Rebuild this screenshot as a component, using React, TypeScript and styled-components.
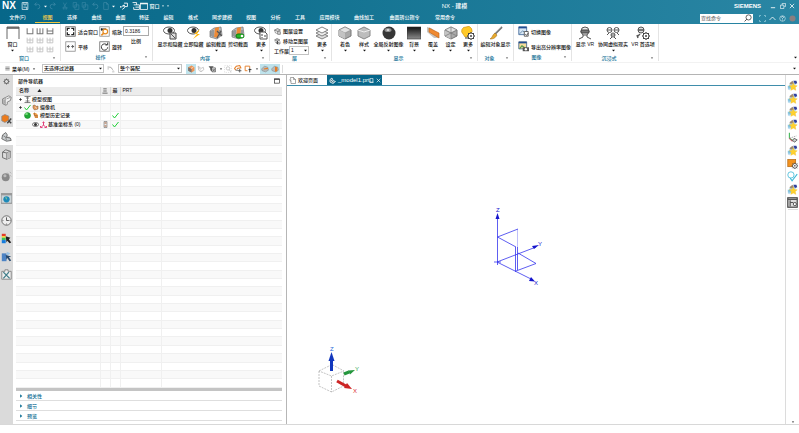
import React, { ReactNode } from "react";
import styled, { createGlobalStyle } from "styled-components";

const Global = createGlobalStyle`
  * { box-sizing: border-box; }
  body { margin: 0; background: #fff; }
  body, button, input, select, table {
    font-family: "Liberation Sans", "Noto Sans CJK SC", sans-serif;
    font-size: 5px;
    font-weight: 500;
    line-height: 8px;
    color: #111;
  }
  button { border: 0; padding: 0; margin: 0; background: transparent; color: inherit; font-size: inherit; }
  svg { display: block; flex: none; }
`;

/* ---------- icons, drawn on a 14 x 14 grid ---------- */

const cubeShape = (
  <>
    <path d="M7 1 13 4V10L7 13 1 10V4Z" fill="#a9a9a9" stroke="#777" />
    <path d="M7 1 13 4 7 7 1 4Z" fill="#e2e2e2" stroke="#888" strokeWidth=".6" />
    <path d="M7 7V13L1 10V4Z" fill="#c3c3c3" />
  </>
);
const eyes = (
  <>
    <ellipse cx="6" cy="4.500" rx="5.500" ry="3.500" fill="#fff" stroke="#555" />
    <circle cx="7" cy="4.500" r="2.500" fill="#333" />
  </>
);
const section = (
  <>
    <path d="M1 5 5 2 12 1 13 9 8 13 1 11Z" fill="#b9bcbf" stroke="#777" strokeWidth=".7" />
    <path d="M6 2 10 1 9 12 5 11Z" fill="#ee8a35" />
    <path d="M2 5V10M4 4V11M11 4V10" stroke="#777" />
  </>
);
const gear = (
  <>
    <circle cx="10" cy="10" r="3" fill="#fff" stroke="#444" />
    <circle cx="10" cy="10" r="1" fill="#444" />
    <path d="M10 6V7M10 13V14M6 10H7M13 10H14M7 7 8 8M12 12 13 13M7 13 8 12M12 8 13 7" stroke="#444" />
  </>
);
const clipboardStar = (
  <>
    <path d="M1 12 3 5 9 3 12 5 9 9 3 13Z" fill="#bfe0f2" />
    <path d="M3 4 7 1 9 4 5 6Z" fill="#a08a70" />
    <path d="M8 1 12 1 13 4 10 5Z" fill="#2e3f9a" />
    <path d="M1 8H5M1 10H5" stroke="#4ba6cf" />
    <path d="m8 4 1.600 3 3.400.4-2.500 2.300.7 3.500L8 11.600 4.900 13.200l.6-3.500L3 7.400 6.400 7Z" fill="#ffd12e" stroke="#f0bd25" strokeWidth=".5" />
  </>
);

const art: Record<string, ReactNode> = {
  window: <><path d="M1 13V1H13V13" fill="#fff" stroke="#666" /><path d="M1 2H13" stroke="#555" strokeWidth="1.500" /></>,
  pane: <path d="M2 2V12H12V2" stroke="#777" strokeWidth="1.800" />,
  paneSplit: <path d="M2 2V12H12V2M7 2V12" stroke="#777" strokeWidth="1.800" />,
  paneRow: <path d="M2 2V12H12V2M2 7H12" stroke="#777" strokeWidth="1.800" />,
  paneDim: <path d="M2 3V12H12V3M2 7H12M7 3V12" stroke="#c0c0c0" strokeWidth="1.500" />,
  fit: <><rect x="1" y="1" width="12" height="12" stroke="#555" /><path d="M3 6V3H6M8 3H11V6M11 8V11H8M6 11H3V8" stroke="#222" strokeWidth="1.600" /></>,
  pan: <><rect x="1" y="1" width="12" height="12" stroke="#888" /><path d="M5 5 3 7 5 9M9 5 11 7 9 9M3 7H6M8 7H11" stroke="#333" /></>,
  zoom: <><rect x="1" y="1" width="12" height="12" stroke="#888" /><path d="M3 4H9M4 3 3 4 4 6" stroke="#222" strokeWidth="1.500" /><circle cx="8" cy="7" r="3" stroke="#e48b24" strokeWidth="1.500" /><path d="M6 9 3 12" stroke="#e48b24" strokeWidth="2" /></>,
  rotate: <><rect x="1" y="1" width="12" height="12" stroke="#666" /><path d="M10 5A4 4 0 1 0 11 8M8 5H11V2" stroke="#222" strokeWidth="1.100" /></>,
  showHide: <>{eyes}<path d="M7 7H13V13H7Z" fill="#ddd" stroke="#444" /><path d="m8 8 4 4" stroke="#555" /></>,
  hideNow: <>{eyes}<path d="m13 3-6 5h3l-4 5 7-5h-3Z" fill="#ffb912" /></>,
  editSection: <>{section}<path d="m8 5 5 5M12 5 8 12" stroke="#555" strokeWidth="1.300" /></>,
  clipSection: <>{section}<rect x="5" y="8" width="8" height="4" rx="2" fill="#28b828" stroke="#0b8011" /><circle cx="11" cy="10" r="1.300" fill="#fff" /></>,
  moreView: <>{eyes}<path d="M6 6H11L13 8V13H6Z" fill="#fff" stroke="#555" /><path d="M8 8V10M8 11V12M10 10H12" stroke="#444" /></>,
  layerSet: <><path d="m7 1 6 3-6 3-6-3Z" fill="#ccc" stroke="#444" /><path d="M1 4 3 10 7 11" stroke="#444" />{gear}</>,
  layerMove: <><path d="m6 1 6 3-6 3-5-3Z" fill="#bbb" stroke="#444" /><path d="M2 7 6 12H12V7" fill="#ddd" stroke="#444" /><path d="M7 6V11M5 9 7 11 9 9" stroke="#111" strokeWidth="1.400" /></>,
  layers: <><path d="M1 10 7 7l6 3-6 3Z" fill="#ddd" stroke="#666" strokeWidth=".8" /><path d="M1 7 7 4l6 3-6 3Z" fill="#eee" stroke="#666" strokeWidth=".8" /><path d="M1 4 7 1l6 3-6 3Z" fill="#fff" stroke="#666" strokeWidth=".8" /></>,
  cube: cubeShape,
  hex: <><path d="M1 4 7 1l6 3v6l-6 3-6-3Z" fill="#bdbdbd" stroke="#888" /><path d="m1 4 6 2 6-2" stroke="#eee" /></>,
  sphere: <><circle cx="7" cy="7" r="6.500" fill="#363636" /><ellipse cx="6" cy="4" rx="3.500" ry="2" fill="#909090" /><ellipse cx="6" cy="4" rx="1.500" ry="1" fill="#ddd" /></>,
  background: <><defs><linearGradient id="night" x1="0" y1="0" x2="0" y2="1"><stop stopColor="#111" /><stop offset="1" stopColor="#8c8c8c" /></linearGradient></defs><path d="M0 1H14V13H0Z" fill="url(#night)" stroke="#333" strokeWidth=".6" /></>,
  slab: <><path d="M1 1 5 2 13 8 12 12 8 12 1 6Z" fill="#c8c5c0" /><path d="M3 2 13 7V12L3 6Z" fill="#f08a31" stroke="#bf5f13" strokeWidth=".6" /></>,
  cubeEdges: <>{cubeShape}<path d="M7 1V13M1 4 13 10M13 4 1 10" stroke="#777" strokeWidth=".7" /></>,
  bulb: <><path d="M5 1A4 4 0 0 0 2 8L4 11H7L9 8A4 4 0 0 0 5 1Z" fill="#ffc928" stroke="#c78b0d" strokeWidth=".6" /><path d="M4 12H7" stroke="#444" />{gear}</>,
  brush: <><path d="M13 1 6 8" stroke="#777" strokeWidth="1.800" /><path d="M12 1 6 7" stroke="#ccc" strokeWidth=".6" /><path d="M6 7 8 9C6 13 3 13 1 13 4 11 3 9 6 7Z" fill="#e7a92c" stroke="#966512" strokeWidth=".5" /></>,
  picture: <><path d="M1 1H11V11H1Z" fill="#d8e7f5" stroke="#315b91" /><path d="M1 2H11" stroke="#234d91" strokeWidth="2" /><path d="m2 10 4-4 3 3" stroke="#50799b" /><path d="M8 7h5v6H8Z" fill="#fff" stroke="#444" /><path d="m9 10 2 2 2-3" stroke="#333" /></>,
  exportPicture: <><path d="M1 1H11V10H1Z" fill="#f5dc9b" stroke="#375a88" /><path d="M1 2H11" stroke="#234d91" strokeWidth="2" /><path d="m2 10 3-4 4 3" stroke="#4f9a4d" strokeWidth="1.500" /><rect x="6" y="8" width="8" height="5" fill="#555" /><circle cx="10" cy="10.500" r="1.500" fill="#fff" /></>,
  headset: <><path d="M4 2Q7 0 10 2L11 6 9 9H5L3 6Z" fill="#eee" stroke="#555" /><rect x="3" y="4" width="8" height="3" rx="1" fill="#777" stroke="#444" /><path d="M5 9V11L1 13M9 9V11L13 13" stroke="#555" /></>,
  people: <><circle cx="3.500" cy="4" r="2.500" stroke="#555" /><circle cx="10.500" cy="4" r="2.500" stroke="#555" /><circle cx="7" cy="9" r="2" stroke="#555" /><path d="M1 4H6M8 4H13M5 9H9M1 9 3 7M13 9 11 7M4 13 6 11M10 13 8 11" stroke="#555" /></>,
  headsetGear: <><circle cx="5" cy="4" r="3" fill="#ddd" stroke="#555" /><path d="M2 4H8M1 11 4 8M1 9 2 12" stroke="#555" strokeWidth="1.400" />{gear}</>,
  list: <path d="M1 3H13M1 7H13M1 11H13" stroke="#444" strokeWidth="1.600" />,
  filter: <path d="M2 2V8M5 3 9 7M7 4 11 10M9 12H13M3 4H7" stroke="#b7b7b7" strokeWidth="1.500" />,
  paintCube: <><path d="m2 4 6-3 5 3v6l-5 3-6-3Z" fill="#ee9556" /><path d="M2 4 8 7V13L2 10Z" fill="#777" /><path d="m7 6 4-2" stroke="#fff" /></>,
  snapDim: <><path d="M2 2 7 6 11 4 12 8 7 12 3 9Z" stroke="#bbb" strokeWidth="1.400" /><path d="m3 4 5 7" stroke="#bbb" /></>,
  funnel: <><path d="M1 2H10L7 6V11L4 9V6Z" fill="#555" /><path d="M6 5H13V12H7Z" fill="#ddd" stroke="#333" /><path d="m8 7 4 4M12 7 8 11" stroke="#333" /></>,
  searchDim: <><rect x="1" y="1" width="12" height="12" stroke="#ccc" strokeDasharray="2 2" /><circle cx="7" cy="6" r="3" stroke="#aaa" /><path d="m9 8 3 4" stroke="#aaa" /></>,
  orangeAdd: <><path d="M3 9 1 6 4 2 10 1 12 5 5 6" stroke="#e47d26" strokeWidth="1.800" /><path d="M3 9H7M10 7V13M7 10H13" stroke="#555" strokeWidth="1.600" /></>,
  orangeBox: <><path d="M10 6V2H2V10H6" stroke="#e47d26" strokeWidth="1.600" /><path d="M8 8H13M10 6V13" stroke="#333" strokeWidth="1.600" /></>,
  disk: <><path d="m1 7 5-5 6 2 1 5-5 3-6-2Z" fill="#b7babb" stroke="#888" /><path d="M5 7 12 6" stroke="#e77d24" strokeWidth="2" /></>,
  diskHalf: <><path d="m1 7 5-5 6 2 1 5-5 3-6-2Z" fill="#b7babb" stroke="#888" /><path d="M7 3 11 4V11L7 12Z" fill="#e77d24" /></>,
  cog: <><circle cx="7" cy="7" r="4" stroke="#444" strokeWidth="1.600" /><path d="M7 1V3M7 11V13M1 7H3M11 7H13M3 3 4 4M10 10 11 11M3 11 4 10M10 4 11 3" stroke="#444" strokeWidth="1.500" /></>,
  clip: <><path d="M2 5 6 3V13L2 11Z" fill="#ccc" stroke="#777" /><path d="m6 3 4-2 3 2-1 4-4 2v3l-2 1" fill="#eee" stroke="#777" /><path d="M7 5 12 3M4 6V11" stroke="#888" /></>,
  constraint: <><path d="M8 8 13 13M8 13 13 7" stroke="#444" strokeWidth="1.800" /><path d="m1 4 4-2 5 2v5l-5 3-4-2Z" fill="#ec7b1c" stroke="#888" /></>,
  part: <><path d="m2 5 4-3 2 3-1 3 5 1 1 3-6 1-6-3Z" fill="#c9cdcf" stroke="#555" /><path d="m3 6 3 2 1 4M6 8h5" stroke="#777" /></>,
  reuse: <><path d="M2 4 6 1l6 2v8l-5 2-5-2Z" fill="#ddd" stroke="#555" /><path d="M2 4 7 5V13M7 5 12 3" stroke="#555" /><path d="M7 5 12 3V11L7 13Z" fill="#bbb" /></>,
  ball: <><circle cx="6" cy="8" r="5" fill="#888" /><circle cx="5" cy="6" r="2" fill="#bbb" /><path d="m8 2 2 2M11 1 13 3M11 5 13 7" stroke="#aaa" /></>,
  globe: <><rect x="0" y="1" width="14" height="12" fill="#cbd4d8" stroke="#777" /><path d="M0 2H14" stroke="#999" strokeWidth="2" /><circle cx="7" cy="8" r="4" fill="#1d89b8" /><path d="m5 5 3 1-1 3Z" fill="#73c49d" /></>,
  clock: <><circle cx="7" cy="7" r="6" fill="#eee" stroke="#555" /><path d="M7 3V7H10M2 7H3M11 7H12M7 11V12" stroke="#333" /></>,
  rainbow: <><rect x="1" y="1" width="5" height="3" fill="#e43a28" /><rect x="1" y="4" width="5" height="2" fill="#ffda25" /><rect x="1" y="6" width="5" height="3" fill="#39c35e" /><rect x="1" y="9" width="5" height="4" fill="#167cdc" /><path d="M6 4 12 6 10 8 13 12 11 13 8 10 7 12Z" fill="#222" /></>,
  bluePick: <><path d="M1 3H7V13H1Z" fill="#4c83c4" /><path d="m7 1 5 2-4 3" fill="#9ac3e4" /><path d="M6 5 13 7 10 8 13 12 11 13 8 9 7 11Z" fill="#27496e" /></>,
  tools: <><path d="M1 3H5V1H9V3H13V13H1Z" fill="#eee" stroke="#777" /><path d="m3 4 8 8M10 4 3 12" stroke="#407d88" strokeWidth="1.600" /></>,
  modelViews: <path d="M1 1H13M1 13H13M4 4H10M7 1V13M3 10H11" stroke="#555" strokeWidth="1.400" />,
  camera: <><path d="m2 3 4-1 2 3 4-1v6l-7 2-3-4Z" fill="#e69b5b" stroke="#755137" /><path d="m6 6 4 3" stroke="#fff" /></>,
  history: <><path d="M2 2 8 2 12 6V12H6Z" fill="#f3a049" /><path d="M5 1V7H11M6 10H12" stroke="#9e6639" strokeWidth="1.400" /></>,
  green: <><circle cx="7" cy="7" r="6" fill="#22a935" stroke="#118022" /><ellipse cx="5" cy="4" rx="3" ry="2" fill="#7ddd7d" /></>,
  check: <path d="m1 7 4 5 8-10" stroke="#21cf37" strokeWidth="2" />,
  eye: <><ellipse cx="7" cy="7" rx="6" ry="4" fill="#fff" stroke="#444" strokeWidth="1.400" /><circle cx="7" cy="7" r="3" fill="#333" /></>,
  csys: <path d="M7 1V8L2 13M7 8 12 13M5 3H9M1 10V13H5M9 13H13V10" stroke="#e23f78" strokeWidth="2" />,
  note: <><path d="M4 1H10V13H4Z" fill="#eee" stroke="#555" /><path d="M5 4H9M5 10H9" stroke="#a75c32" strokeWidth="2" /></>,
  column: <path d="M3 2H11M3 7H11M1 12H13" stroke="#333" strokeWidth="1.600" />,
  box: <><rect x="1" y="2" width="12" height="10" stroke="#222" strokeWidth="1.500" /><path d="M1 3H13" stroke="#222" strokeWidth="2" /></>,
  page: <><path d="M3 1H9L13 5V13H4Z" fill="#fff" stroke="#555" /><path d="M9 1V5H13M1 5 4 9" stroke="#555" /></>,
  partLight: <path d="m2 5 4-3 2 5 5 2-5 4-6-3Z M4 6l5 5" stroke="#e9f4f8" strokeWidth="1.600" fill="#527f91" />,
  popout: <path d="M3 1H11V12H3ZM1 12H13" stroke="#fff" strokeWidth="1.800" />,
  cross: <path d="m2 2 10 10M12 2 2 12" stroke="currentColor" strokeWidth="1.800" />,
  star: clipboardStar,
  axes: <><path d="M3 1V8L8 11" stroke="#33b04a" strokeWidth="1.300" /><path d="M3 8 12 5" stroke="#999" strokeDasharray="2 1" /><path d="m3 8 4 4" stroke="#c75568" strokeWidth="1.300" /><path d="M9 8 13 10 10 13 7 11Z" fill="#ccc" stroke="#555" /></>,
  orange: <><rect x="1" y="2" width="10" height="9" fill="#f3921d" stroke="#b96c17" />{gear}</>,
  sketch: <><circle cx="5" cy="5" r="4" stroke="#3cb8d7" /><path d="M6 13 13 4M4 9 7 13" stroke="#3cb8d7" strokeWidth="1.400" /></>,
  sheet: <><rect x="1" y="1" width="12" height="12" fill="#ddd" stroke="#444" strokeWidth="1.500" /><path d="M1 3H13M4 4V12M4 7H8" stroke="#555" strokeWidth="1.500" /><circle cx="10" cy="9" r="2" fill="#fff" stroke="#333" /></>,
  save: <path d="M2 1H12V13H2ZM5 1V5H9V1M4 9H10V13" stroke="#eaf5f9" strokeWidth="1.300" />,
  undo: <path d="M3 4H8A4 4 0 0 1 8 12M6 1 3 4 6 7" stroke="currentColor" strokeWidth="1.300" />,
  redo: <path d="M11 4H6A4 4 0 0 0 6 12M8 1 11 4 8 7" stroke="currentColor" strokeWidth="1.300" />,
  cut: <path d="M4 1 8 9M10 1 5 9M3 10 6 9 5 13ZM8 9 11 10 9 13Z" stroke="currentColor" />,
  copy: <path d="M2 1H8V9H2ZM5 5H12V13H5Z" stroke="currentColor" />,
  newPage: <path d="M3 1H8L11 4V13H3ZM8 1V4H11" stroke="currentColor" strokeWidth="1.200" />,
  touch: <path d="M7 2H13V8H8M5 7 7 5 9 8M2 9 6 6 8 10 4 13M1 7V10" stroke="#fff" strokeWidth="1.500" />,
  cascade: <path d="M1 1H8V5M3 5H13V9M6 9H13V13H3V9" stroke="#fff" strokeWidth="1.500" />,
  windowLight: <><rect x="1" y="2" width="12" height="11" stroke="#fff" strokeWidth="1.300" /><path d="M1 3H13" stroke="#fff" strokeWidth="2" /></>,
  minimize: <path d="M2 11H12" stroke="#fff" strokeWidth="2" />,
  restore: <path d="M5 5V1H13V8H10M1 5H9V13H1Z" stroke="#fff" strokeWidth="1.500" />,
  search: <><circle cx="8" cy="6" r="4.500" stroke="#333" strokeWidth="1.300" /><path d="M5 9 1 13" stroke="#333" strokeWidth="1.500" /></>,
  full: <path d="M1 4V1H4M10 1H13V4M13 10V13H10M4 13H1V10" stroke="#9ed1df" strokeWidth="1.400" />,
  up: <path d="m1 10 6-6 6 6" stroke="#fff" strokeWidth="1.600" />,
  help: <><circle cx="7" cy="7" r="5.500" stroke="#fff" /><path d="M5 5Q5 3 7 3T9 5L7 7V9M7 10V11" stroke="#fff" strokeWidth="1.300" /></>,
  avatar: <circle cx="7" cy="7" r="6" fill="#8a7f80" />,
  down: <path d="M3 5H11L7 10Z" fill="currentColor" />,
  right: <path d="M5 3V11L10 7Z" fill="currentColor" />,
  plus: <path d="M7 3V11M3 7H11" stroke="#222" strokeWidth="2" />,
  sort: <path d="M7 3 13 11H1Z" fill="#222" />,
};

const Icon = ({ name, size = 8 }: { name: string; size?: number }) => (
  <svg width={size} height={size} viewBox="0 0 14 14" fill="none" stroke="none" aria-hidden="true">
    {art[name]}
  </svg>
);

/* ---------- frame and title bar ---------- */

const Frame = styled.div`
  height: 100vh;
  display: flex;
  flex-direction: column;
  overflow: hidden;
`;
const Header = styled.header`
  flex: none;
  background: linear-gradient(90deg, #076789 0%, #10708f 30%, #2a86a4 100%);
  color: #fff;
`;
const TitleBar = styled.div`
  height: 12px;
  display: grid;
  grid-template-columns: 1fr auto 1fr;
  align-items: center;
  padding: 0 3px 0 2px;
`;
const Logo = styled.strong`
  font-size: 10px;
  line-height: 12px;
  width: 16px;
`;
const Quick = styled.div`
  display: flex;
  align-items: center;
  height: 12px;
`;
const QuickButton = styled.button<{ $dim?: boolean; $w?: number }>`
  width: ${(p) => p.$w ?? 11}px;
  height: 10px;
  display: flex;
  align-items: center;
  justify-content: center;
  gap: 1px;
  white-space: nowrap;
  color: ${(p) => (p.$dim ? "#3f8ba8" : "#fff")};
`;
const Title = styled.div`
  font-size: 6px;
  padding-left: 111px;
`;
const WindowControls = styled.div`
  display: flex;
  justify-content: flex-end;
  align-items: center;
`;
const Brand = styled.strong`
  font-size: 6px;
  margin-right: 7px;
`;
const MenuBar = styled.div`
  height: 12px;
  display: flex;
  justify-content: space-between;
  padding-right: 2px;
`;
const Tabs = styled.nav`
  display: flex;
`;
const MenuTab = styled.button<{ $w: number; $active?: boolean }>`
  width: ${(p) => p.$w}px;
  height: 11px;
  white-space: nowrap;
  color: ${(p) => (p.$active ? "#ffd34a" : "#fff")};
  border-bottom: 1px solid ${(p) => (p.$active ? "#f3c63c" : "transparent")};
`;
const Finder = styled.div`
  display: flex;
  align-items: center;
`;
const SearchBox = styled.label`
  width: 53px;
  height: 9px;
  background: #fff;
  display: flex;
  align-items: center;
  padding-right: 1px;
  margin-right: 4px;
`;
const SearchInput = styled.input`
  border: 0;
  outline: 0;
  padding: 0 1px;
  flex: 1;
  min-width: 0;
  height: 8px;
  background: transparent;
  &::placeholder { color: #777; opacity: 1; }
`;

/* ---------- ribbon ---------- */

const Ribbon = styled.section`
  flex: none;
  height: 39px;
  display: flex;
  align-items: stretch;
  padding-bottom: 1px;
  border-bottom: 1px solid #f2f2f2;
`;
const Group = styled.div<{ $w: number; $pad?: number }>`
  width: ${(p) => p.$w}px;
  display: flex;
  flex-direction: column;
  padding-top: 2px;
  border-right: 1px solid #e4e4e4;
`;
const GroupBody = styled.div<{ $pad: number }>`
  height: 28px;
  display: flex;
  padding-left: ${(p) => p.$pad}px;
`;
const GroupLabel = styled.div`
  display: grid;
  grid-template-columns: 12px 1fr 8px;
  align-items: center;
  text-align: center;
  height: 8px;
  padding-right: 4px;
  color: #0f6f94;
  & > svg { color: #333; grid-column: 3; justify-self: end; }
  & > span { grid-column: 1 / 3; }
`;
const Tool = styled.button<{ $w: number }>`
  width: ${(p) => p.$w}px;
  flex: none;
  height: 28px;
  display: flex;
  flex-direction: column;
  align-items: center;
  white-space: nowrap;
`;
const ToolText = styled.span`
  height: 7px;
  line-height: 7px;
  margin-top: 1px;
`;
const PaneGrid = styled.div`
  display: grid;
  grid-template-columns: repeat(3, 10px);
  grid-auto-rows: 9px;
`;
const Stack = styled.div<{ $w: number; $tight?: boolean }>`
  width: ${(p) => p.$w}px;
  flex: none;
  display: flex;
  flex-direction: column;
  gap: ${(p) => (p.$tight ? 0 : 4)}px;
`;
const Command = styled.button`
  display: flex;
  align-items: center;
  gap: 2px;
  min-height: 10px;
  white-space: nowrap;
`;
const Scale = styled.label`
  display: flex;
  flex-direction: column;
  align-items: center;
  gap: 1px;
`;
const ScaleInput = styled.input`
  width: 26px;
  height: 10px;
  padding: 0 1px;
  border: 1px solid #aaa;
`;
const LayerField = styled.label`
  display: flex;
  align-items: center;
  white-space: nowrap;
`;
const RibbonEnd = styled.div`
  flex: 1;
  display: flex;
  justify-content: flex-end;
  align-items: flex-end;
  padding: 0 1px 1px;
`;

/* ---------- selection bar ---------- */

const SelectBar = styled.div`
  flex: none;
  height: 12px;
  display: flex;
  align-items: center;
  padding: 0 2px 0 5px;
  border-bottom: 1px solid #b4b4b4;
`;
const MenuButton = styled(Command)`
  width: 37px;
`;
const SelectShell = styled.span<{ $w: number }>`
  width: ${(p) => p.$w}px;
  height: 9px;
  display: grid;
  align-items: center;
  border: 1px solid #c2c2c2;
  background: #fff;
  & > select, & > svg { grid-area: 1 / 1; }
  & > svg { justify-self: end; pointer-events: none; }
`;
const Select = styled.select`
  appearance: none;
  border: 0;
  outline: 0;
  padding: 0 1px;
  width: 100%;
  height: 7px;
  line-height: 7px;
  background: transparent;
`;
const BarButton = styled.button<{ $w?: number; $on?: boolean }>`
  width: ${(p) => p.$w ?? 10}px;
  height: 10px;
  display: flex;
  align-items: center;
  justify-content: center;
  background: ${(p) => (p.$on ? "#bfe3ec" : "transparent")};
`;
const ViewTools = styled.div`
  display: flex;
  margin-left: 4px;
`;
const Spacer = styled.div`
  flex: 1;
  height: 8px;
  border-left: 1px solid #ddd;
  margin-left: 2px;
`;

/* ---------- work area ---------- */

const Work = styled.main`
  flex: 1;
  min-height: 0;
  display: flex;
  border-bottom: 1px solid #d8d8d8;
`;
const Rail = styled.nav`
  flex: none;
  width: 13px;
  background: #dadada;
  display: flex;
  flex-direction: column;
`;
const RailButton = styled.button<{ $gap?: number; $on?: boolean; $small?: boolean }>`
  flex: none;
  margin-top: ${(p) => p.$gap ?? 0}px;
  height: ${(p) => (p.$small ? 12 : 18)}px;
  display: flex;
  align-items: center;
  justify-content: center;
  background: ${(p) => (p.$on ? "#fff" : "transparent")};
`;
const Navigator = styled.aside`
  flex: none;
  width: 274px;
  display: flex;
  flex-direction: column;
  padding: 0 4px 3px 3px;
  border-right: 1px solid #b6b6b6;
`;
const NavigatorTitle = styled.div`
  flex: none;
  height: 12px;
  display: flex;
  align-items: center;
  justify-content: space-between;
  padding: 0 2px 0 2px;
`;
const TreeArea = styled.div`
  flex: 1;
  min-height: 0;
  overflow: hidden;
`;
const Tree = styled.table`
  width: 100%;
  height: 100%;
  table-layout: fixed;
  border-collapse: collapse;
  tr:nth-child(even) td { background: #f9f9f9; }
  th, td {
    padding: 0;
    height: 8px;
    line-height: 7px;
    font-weight: 500;
    text-align: left;
    border-right: 1px solid #f0f0f0;
    border-bottom: 1px solid #f0f0f0;
  }
  th { background: #ececec; border-color: #d8d8d8; }
  th:last-child, td:last-child { border-right: 0; }
`;
const Cell = styled.div<{ $indent?: number; $center?: boolean }>`
  height: 7px;
  display: flex;
  align-items: center;
  gap: 1px;
  overflow: hidden;
  white-space: nowrap;
  padding-left: ${(p) => p.$indent ?? 0}px;
  justify-content: ${(p) => (p.$center ? "center" : "flex-start")};
`;
const HeadCell = styled(Cell)`
  padding-left: 3px;
  gap: 8px;
`;
const Section = styled.button`
  flex: none;
  height: 10px;
  display: flex;
  align-items: center;
  gap: 3px;
  padding-left: 2px;
  color: #0f6f94;
  border-bottom: 1px solid #dedede;
`;
const Sash = styled.div`
  flex: none;
  height: 3px;
  background: #c4c4c4;
`;
const Viewport = styled.section`
  flex: 1;
  min-width: 0;
  display: flex;
  flex-direction: column;
`;
const FileTabs = styled.div`
  flex: none;
  height: 11px;
  display: flex;
  border-bottom: 1px solid #3f8dab;
`;
const FileTab = styled.button<{ $w: number; $on?: boolean }>`
  width: ${(p) => p.$w}px;
  height: 10px;
  display: flex;
  align-items: center;
  gap: 2px;
  padding-left: 2px;
  white-space: nowrap;
  background: ${(p) => (p.$on ? "#06678b" : "#fff")};
  color: ${(p) => (p.$on ? "#fff" : "#1c1c1c")};
`;
const FileName = styled.span`
  width: 29px;
  font-size: 6px;
  text-align: left;
`;
const Scene = styled.svg`
  flex: 1;
  width: 100%;
  min-height: 0;
`;
const ResourceBar = styled.nav`
  flex: none;
  width: 14px;
  display: flex;
  flex-direction: column;
  align-items: center;
  padding-top: 4px;
  border-left: 1px solid #dcdcdc;
`;
const ResourceButton = styled.button`
  height: 13px;
  display: flex;
  align-items: center;
`;
const Fill = styled.div`
  flex: 1;
  width: 10px;
  border-top: 1px solid #ddd;
`;
const Status = styled.footer`
  flex: none;
  height: 8px;
`;

/* ---------- data ---------- */

const quick: [string, number, boolean][] = [
  ["save", 13, false], ["undo", 12, true], ["down", 5, false], ["redo", 10, true],
  ["cut", 13, true], ["copy", 9, true], ["copy", 9, true], ["undo", 11, true],
  ["newPage", 11, true], ["down", 5, false], ["touch", 15, false], ["cascade", 9, false],
];

const menus: [string, number][] = [
  ["文件(F)", 35], ["视图", 25], ["选择", 24], ["曲线", 25], ["曲面", 23], ["特征", 24],
  ["编辑", 25], ["格式", 24], ["同步建模", 34], ["视图", 24], ["分析", 25], ["工具", 24],
  ["应用模块", 35], ["曲线加工", 34], ["曲面拆公指令", 47], ["常用命令", 34],
];

interface ToolItem { icon: string; label: string; w: number; menu?: boolean }
const content: ToolItem[] = [
  { icon: "showHide", label: "显示和隐藏", w: 24 },
  { icon: "hideNow", label: "立即隐藏", w: 23 },
  { icon: "editSection", label: "编辑截面", w: 22, menu: true },
  { icon: "clipSection", label: "剪切截面", w: 22 },
  { icon: "moreView", label: "更多", w: 24, menu: true },
];
const display: ToolItem[] = [
  { icon: "cube", label: "着色", w: 20, menu: true },
  { icon: "hex", label: "样式", w: 18, menu: true },
  { icon: "sphere", label: "全局反射图像", w: 31, menu: true },
  { icon: "background", label: "背景", w: 20, menu: true },
  { icon: "slab", label: "覆盖", w: 18, menu: true },
  { icon: "cubeEdges", label: "设定", w: 17, menu: true },
  { icon: "bulb", label: "更多", w: 18, menu: true },
];
const immersive: ToolItem[] = [
  { icon: "headset", label: "显示 VR", w: 26 },
  { icon: "people", label: "协同虚拟现实", w: 30, menu: true },
  { icon: "headsetGear", label: "VR 首选项", w: 30 },
];

const rail: [string, number, string][] = [
  ["clip", 4, "装配导航器"], ["constraint", 0, "约束导航器"], ["part", 0, "部件导航器"], ["reuse", 0, "重用库"],
  ["ball", 4, "材料"], ["globe", 4, "浏览器"], ["clock", 4, "历史记录"], ["rainbow", 0, "可视化"],
  ["bluePick", 0, "选择"], ["tools", 0, "工具"],
];

const resources = ["star", "star", "star", "star", "axes", "star", "orange", "sketch", "star", "sheet"];

interface TreeRow { label: string; icons: string[]; indent: number; note?: boolean; done?: boolean }
const rows: TreeRow[] = [
  { label: "模型视图", icons: ["plus", "modelViews"], indent: 2 },
  { label: "摄像机", icons: ["plus", "check", "camera"], indent: 2 },
  { label: "模型历史记录", icons: ["green", "history"], indent: 8, done: true },
  { label: "基准坐标系 (0)", icons: ["eye", "csys"], indent: 16, note: true, done: true },
];
const blanks = Array.from({ length: 31 }, (_, i) => i);

/* ---------- pieces ---------- */

const ToolButton = ({ icon, label, w, menu }: ToolItem) => (
  <Tool $w={w}>
    <Icon name={icon} size={14} />
    <ToolText>{label}</ToolText>
    {menu && <Icon name="down" size={5} />}
  </Tool>
);

const RibbonGroup = ({ name, w, pad = 0, children }: { name: string; w: number; pad?: number; children: ReactNode }) => (
  <Group $w={w}>
    <GroupBody $pad={pad}>{children}</GroupBody>
    <GroupLabel><span>{name}</span><Icon name="down" size={4} /></GroupLabel>
  </Group>
);

const Picker = ({ w, label, value }: { w: number; label: string; value: string }) => (
  <SelectShell $w={w}>
    <Select aria-label={label} defaultValue={value}><option>{value}</option></Select>
    <Icon name="down" size={5} />
  </SelectShell>
);

const Model = () => (
  <Scene viewBox="287 86 498 338" preserveAspectRatio="xMinYMin meet" fontFamily="Liberation Sans, sans-serif" fontSize="6">
    <g stroke="#3535ee" strokeWidth=".8" fill="none">
      <path d="M497.500 265V217M494 262H501M497 262 536 247M497 262 533 280" />
      <path d="M497.500 237 518 229M497.500 237 516 247M515.500 247V272M517.500 247V270M516 271 536 263.500 518 253" />
      <path d="M517.500 229V247" strokeOpacity=".4" />
    </g>
    <g fill="#1515cc">
      <path d="M497.500 213 499.500 219H495.500ZM539 245 534 249 532 246ZM535 281.500 529 281 531 277Z" />
      <text x="496" y="212">Z</text><text x="538" y="246">Y</text><text x="534" y="285">X</text>
    </g>
    <g stroke="#aaa" strokeWidth=".7" strokeDasharray="2 1" fill="none">
      <path d="M319 371 332 364.500 344 371 331.500 376ZM319 371V386L331.500 392 343.500 386V371M331.500 376V392" />
    </g>
    <path d="M331.500 371V358" stroke="#1237bd" strokeWidth="3" />
    <path d="m331.500 352 3 9h-6Z" fill="#1237bd" />
    <path d="m344 374 5-2" stroke="#24963d" strokeWidth="3" />
    <path d="m355 370-7 .5 2 4Z" fill="#24963d" />
    <path d="m337 381 9 5" stroke="#cc2525" strokeWidth="3" />
    <path d="m352 389-8-1 3-5Z" fill="#cc2525" />
    <text x="330" y="351" fill="#2869d8">Z</text>
    <text x="355" y="371" fill="#31a653">Y</text>
    <text x="353" y="393" fill="#dc3333">X</text>
  </Scene>
);

export default function App() {
  return (
    <Frame>
      <Global />
      <Header>
        <TitleBar>
          <Quick>
            <Logo>NX</Logo>
            {quick.map(([name, w, dim], i) => (
              <QuickButton key={i} $w={w} $dim={dim} aria-label={name}>
                <Icon name={name} size={name === "down" ? 5 : 8} />
              </QuickButton>
            ))}
            <QuickButton $w={20}><Icon name="windowLight" size={8} />窗口</QuickButton>
            <QuickButton $w={5} aria-label="窗口菜单"><Icon name="down" size={4} /></QuickButton>
            <QuickButton $w={5} aria-label="自定义"><Icon name="down" size={4} /></QuickButton>
          </Quick>
          <Title>NX - 建模</Title>
          <WindowControls>
            <Brand>SIEMENS</Brand>
            <QuickButton $w={10} aria-label="最小化"><Icon name="minimize" size={6} /></QuickButton>
            <QuickButton $w={10} aria-label="还原"><Icon name="restore" size={6} /></QuickButton>
            <QuickButton $w={8} aria-label="关闭"><Icon name="cross" size={6} /></QuickButton>
          </WindowControls>
        </TitleBar>
        <MenuBar>
          <Tabs>
            {menus.map(([label, w], i) => <MenuTab key={i} $w={w} $active={i === 1}>{label}</MenuTab>)}
          </Tabs>
          <Finder>
            <SearchBox>
              <SearchInput aria-label="查找命令" placeholder="查找命令" />
              <Icon name="search" size={8} />
            </SearchBox>
            {["full", "up", "help", "avatar"].map((name) => (
              <QuickButton key={name} $w={10} aria-label={name}><Icon name={name} size={7} /></QuickButton>
            ))}
          </Finder>
        </MenuBar>
      </Header>

      <Ribbon>
        <RibbonGroup name="窗口" w={61}>
          <Tool $w={25}><Icon name="window" size={14} /><ToolText>窗口</ToolText><Icon name="down" size={5} /></Tool>
          <PaneGrid>
            {["pane", "paneSplit", "paneRow", "paneDim", "paneDim", "paneDim", "paneDim", "paneDim", "paneDim"].map((name, i) => (
              <BarButton key={i} aria-label={`布局 ${i + 1}`}><Icon name={name} size={8} /></BarButton>
            ))}
          </PaneGrid>
        </RibbonGroup>
        <RibbonGroup name="操作" w={92} pad={4}>
          <Stack $w={34}>
            <Command><Icon name="fit" size={11} />适合窗口</Command>
            <Command><Icon name="pan" size={11} />平移</Command>
          </Stack>
          <Stack $w={24}>
            <Command><Icon name="zoom" size={11} />缩放</Command>
            <Command><Icon name="rotate" size={11} />旋转</Command>
          </Stack>
          <Scale><ScaleInput aria-label="比例" defaultValue="0.3186" />比例</Scale>
        </RibbonGroup>
        <RibbonGroup name="内容" w={117} pad={5}>
          {content.map((t) => <ToolButton key={t.label} {...t} />)}
        </RibbonGroup>
        <RibbonGroup name="层" w={62} pad={4}>
          <Stack $w={37} $tight>
            <Command><Icon name="layerSet" size={7} />图层设置</Command>
            <Command><Icon name="layerMove" size={7} />移动至图层</Command>
            <LayerField>工作层<Picker w={20} label="工作层" value="1" /></LayerField>
          </Stack>
          <ToolButton icon="layers" label="更多" w={22} menu />
        </RibbonGroup>
        <RibbonGroup name="显示" w={146} pad={3}>
          {display.map((t) => <ToolButton key={t.icon} {...t} />)}
        </RibbonGroup>
        <RibbonGroup name="对象" w={36}>
          <ToolButton icon="brush" label="编辑对象显示" w={35} />
        </RibbonGroup>
        <RibbonGroup name="图像" w={58} pad={4}>
          <Stack $w={50}>
            <Command><Icon name="picture" size={11} />切换图像</Command>
            <Command><Icon name="exportPicture" size={11} />导出高分辨率图像</Command>
          </Stack>
        </RibbonGroup>
        <RibbonGroup name="沉浸式" w={87}>
          {immersive.map((t) => <ToolButton key={t.icon} {...t} />)}
        </RibbonGroup>
        <RibbonEnd><Icon name="down" size={5} /></RibbonEnd>
      </Ribbon>

      <SelectBar>
        <MenuButton><Icon name="list" size={5} />菜单(M)<Icon name="down" size={4} /></MenuButton>
        <Picker w={62} label="选择过滤器" value="无选择过滤器" />
        <BarButton $w={14} aria-label="过滤"><Icon name="filter" /></BarButton>
        <Picker w={64} label="选择范围" value="整个装配" />
        <ViewTools>
          <BarButton $on aria-label="着色面"><Icon name="paintCube" /></BarButton>
          <BarButton aria-label="捕捉"><Icon name="snapDim" /></BarButton>
          <BarButton $w={12} aria-label="过滤选项"><Icon name="funnel" /></BarButton>
          <BarButton $w={5} aria-label="更多过滤"><Icon name="down" size={4} /></BarButton>
          <BarButton aria-label="查找"><Icon name="searchDim" /></BarButton>
          <BarButton aria-label="添加"><Icon name="orangeAdd" /></BarButton>
          <BarButton aria-label="框选"><Icon name="orangeBox" /></BarButton>
          <BarButton $w={7} aria-label="更多选择"><Icon name="down" size={4} /></BarButton>
          <BarButton $on aria-label="面"><Icon name="disk" /></BarButton>
          <BarButton $on aria-label="体"><Icon name="diskHalf" /></BarButton>
        </ViewTools>
        <Spacer />
        <Icon name="down" size={5} />
      </SelectBar>

      <Work>
        <Rail>
          <RailButton $small aria-label="设置"><Icon name="cog" size={7} /></RailButton>
          {rail.map(([name, gap, label]) => (
            <RailButton key={name} $gap={gap} $on={name === "part"} aria-label={label}><Icon name={name} size={11} /></RailButton>
          ))}
        </Rail>
        <Navigator>
          <NavigatorTitle>部件导航器<Icon name="box" size={6} /></NavigatorTitle>
          <TreeArea>
            <Tree>
              <colgroup><col width="84" /><col width="10" /><col width="10" /><col width="41" /><col /></colgroup>
              <thead>
                <tr>
                  <th><HeadCell>名称<Icon name="sort" size={5} /></HeadCell></th>
                  <th><Cell $center><Icon name="column" size={6} /></Cell></th>
                  <th><Cell $center>最</Cell></th>
                  <th><Cell $indent={2}>PRT</Cell></th>
                  <th />
                </tr>
              </thead>
              <tbody>
                {rows.map((r) => (
                  <tr key={r.label}>
                    <td><Cell $indent={r.indent}>{r.icons.map((n) => <Icon key={n} name={n} size={n === "plus" ? 5 : 7} />)}{r.label}</Cell></td>
                    <td><Cell $center>{r.note && <Icon name="note" size={7} />}</Cell></td>
                    <td><Cell $center>{r.done && <Icon name="check" size={7} />}</Cell></td>
                    <td />
                    <td />
                  </tr>
                ))}
                {blanks.map((i) => <tr key={i}><td /><td /><td /><td /><td /></tr>)}
              </tbody>
            </Tree>
          </TreeArea>
          <Sash />
          {["相关性", "细节", "预览"].map((s) => <Section key={s}><Icon name="right" size={6} />{s}</Section>)}
        </Navigator>
        <Viewport>
          <FileTabs>
            <FileTab $w={40}><Icon name="page" size={7} />欢迎页面</FileTab>
            <FileTab $w={55} $on><Icon name="partLight" size={7} /><FileName>_model1.prt</FileName><Icon name="popout" size={5} /><Icon name="cross" size={5} /></FileTab>
          </FileTabs>
          <Model />
        </Viewport>
        <ResourceBar>
          {resources.map((name, i) => (
            <ResourceButton key={i} aria-label={`资源 ${i + 1}`}><Icon name={name} size={11} /></ResourceButton>
          ))}
          <Fill />
          <Icon name="down" size={4} />
        </ResourceBar>
      </Work>
      <Status />
    </Frame>
  );
}
